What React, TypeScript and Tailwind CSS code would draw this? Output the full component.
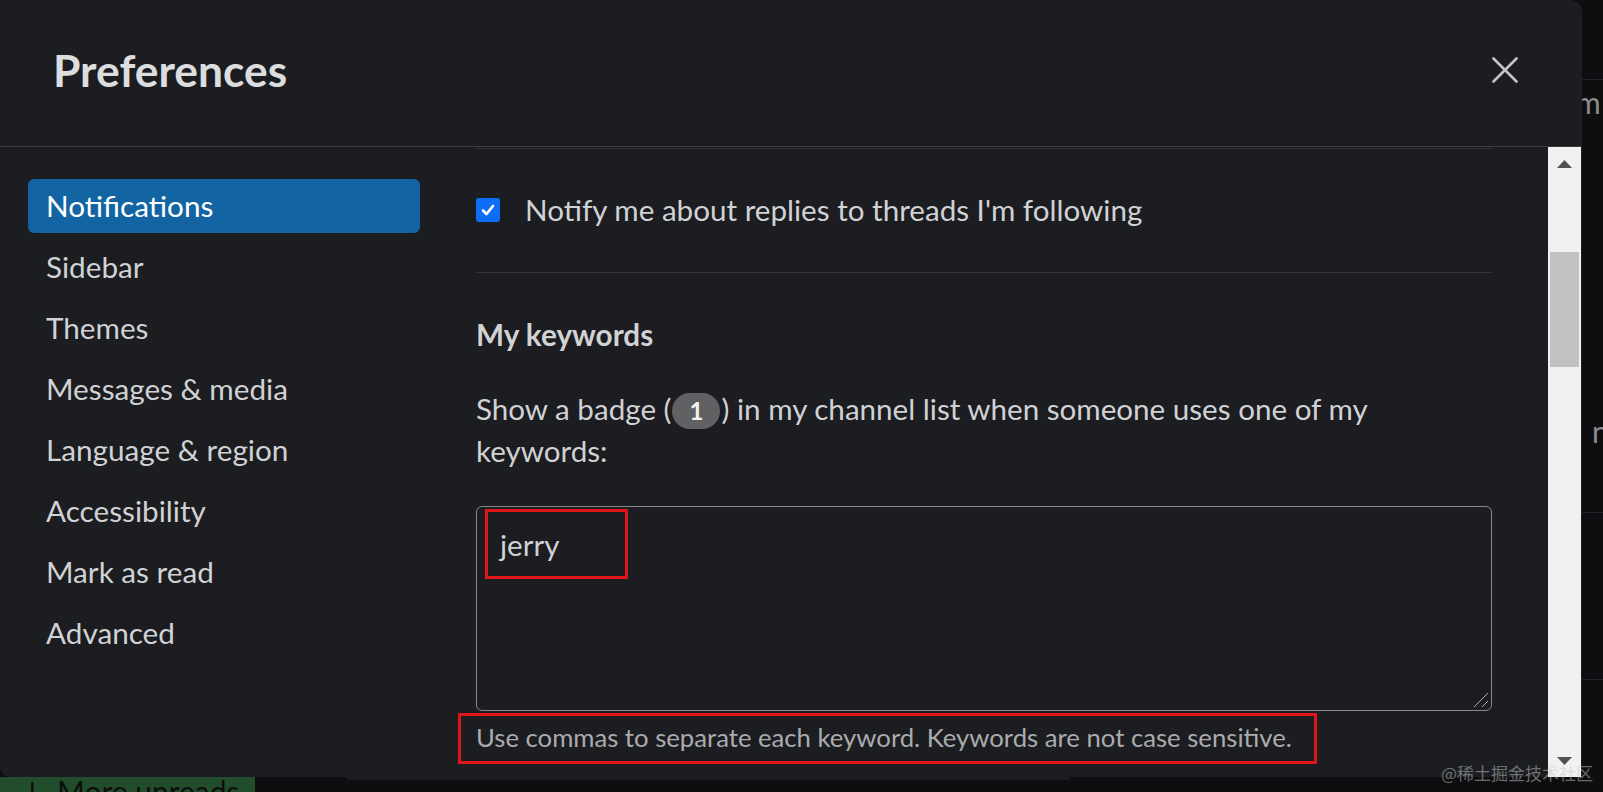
import React from "react";

const navItems = [
  "Notifications",
  "Sidebar",
  "Themes",
  "Messages & media",
  "Language & region",
  "Accessibility",
  "Mark as read",
  "Advanced",
];

function CloseIcon() {
  return (
    <svg width="26" height="26" viewBox="0 0 26 26" fill="none">
      <path d="M1.5 1.5 L24.5 24.5 M24.5 1.5 L1.5 24.5" stroke="#c4c4c5" strokeWidth="2.6" strokeLinecap="round" />
    </svg>
  );
}

function Scrollbar() {
  return (
    <div className="flex w-[33px] flex-col items-center bg-[#f1f1f1] pb-[12px] pt-[13px]">
      <svg width="15" height="8" viewBox="0 0 15 8">
        <polygon points="7.5,0 15,8 0,8" fill="#505050" />
      </svg>
      <div className="mt-[84px] h-[115px] w-[29px] bg-[#c1c1c1]" />
      <div className="flex-1" />
      <svg width="15" height="8" viewBox="0 0 15 8">
        <polygon points="0,0 15,0 7.5,8" fill="#505050" />
      </svg>
    </div>
  );
}

export default function App() {
  return (
    <div className="relative flex h-[792px] w-[1603px] flex-col overflow-hidden bg-[#0e0e10] font-[Lato,'Noto_Sans',sans-serif]">
      <div className="flex h-[777px]">
        {/* modal */}
        <div className="flex w-[1582px] flex-col overflow-hidden rounded-bl-[10px] rounded-tr-[12px] bg-[#1b1d21]">
          <div className="flex h-[147px] items-center justify-between border-b border-[#393a3e] pb-[7px] pl-[53px] pr-[64px]">
            <h1 className="text-[44.4px] font-bold leading-[44px] text-[#dcdddf]">Preferences</h1>
            <CloseIcon />
          </div>

          <div className="flex h-[630px]">
            <nav className="flex w-[440px] flex-col gap-[7px] pl-[28px] pr-[20px] pt-[32px]">
              {navItems.map((item, i) => (
                <div
                  key={item}
                  className={
                    i === 0
                      ? "flex h-[54px] items-center rounded-[6px] bg-[#1264a3] pl-[18px] text-[29.7px] leading-[54px] text-white"
                      : "flex h-[54px] items-center rounded-[6px] pl-[18px] text-[29.7px] leading-[54px] text-[#d1d2d3]"
                  }
                >
                  {item}
                </div>
              ))}
            </nav>

            <div className="flex-1 overflow-hidden pl-[36px] pr-[56px]">
              <div className="mt-px h-px bg-[#2e2f33]" />

              <label className="mt-[40px] flex h-[42px] items-center gap-[25px]">
                <span className="flex h-[24px] w-[24px] items-center justify-center rounded-[3px] bg-[#0f6ef7]">
                  <svg width="16" height="16" viewBox="0 0 16 16" fill="none">
                    <path d="M3 8.5 L6.5 12 L13 4" stroke="white" strokeWidth="2.6" strokeLinecap="round" strokeLinejoin="round" />
                  </svg>
                </span>
                <span className="text-[29.6px] leading-[42px] text-[#d1d2d3]">
                  Notify me about replies to threads I'm following
                </span>
              </label>

              <div className="mt-[41px] h-px bg-[#35363a]" />

              <h2 className="mt-[41px] text-[29.7px] font-bold leading-[42px] text-[#d1d2d3]">My keywords</h2>

              <p className="mt-[32px] text-[29.6px] leading-[42px] text-[#d1d2d3]">
                Show a badge (
                <span className="mx-[1px] inline-flex h-[36px] w-[48px] items-center justify-center rounded-full bg-[#616164] text-[24px] font-bold leading-[36px] text-[#f2f2f2]">
                  1
                </span>
                ) in my channel list when someone uses one of my
                <br />
                keywords:
              </p>

              <div className="relative mt-[34px] h-[205px] rounded-[6px] border border-[#87888b] pl-[23px] pt-[17px]">
                <div className="text-[29.6px] leading-[42px] text-[#d1d2d3]">jerry</div>
                <div className="absolute left-[8px] top-[2px] h-[70px] w-[143px] border-[3px] border-[#e0151b]" />
                <svg className="absolute bottom-[2px] right-[2px]" width="16" height="16" viewBox="0 0 16 16">
                  <path d="M1 15 L15 1 M9 15 L15 9" stroke="#a9a9ab" strokeWidth="1" />
                </svg>
              </div>

              <div className="-ml-[18px] mt-[2px] h-[51px] w-[859px] border-[3px] border-[#e0151b] pl-[15px] pt-[3px]">
                <p className="whitespace-nowrap text-[25.7px] leading-[36px] text-[#ababad]">
                  Use commas to separate each keyword. Keywords are not case sensitive.
                </p>
              </div>
            </div>

            <Scrollbar />
            <div className="w-px" />
          </div>
        </div>

        {/* backdrop behind the modal */}
        <div className="flex flex-1 flex-col overflow-hidden">
          <div className="h-[79px]" />
          <div className="h-px bg-[#242428]" />
          <div className="-ml-[6px] mt-[4px] text-[30px] leading-[36px] text-[#8c8c90]">m</div>
          <div className="h-[293px]" />
          <div className="ml-[10px] text-[30px] leading-[36px] text-[#8c8c90]">n</div>
          <div className="h-[63px]" />
          <div className="h-px bg-[#222226]" />
          <div className="h-[166px]" />
          <div className="h-px bg-[#222226]" />
        </div>
      </div>

      <div className="flex h-[15px] overflow-hidden">
        <div className="flex w-[255px] items-start gap-[14px] bg-[#214d2c] pl-[22px]">
          <span className="-mt-[1px] text-[28px] leading-[30px] text-[#0d0d0d]">↓</span>
          <span className="-mt-[1px] text-[30px] leading-[30px] text-[#0d0d0d]">More unreads</span>
        </div>
        <div className="w-[92px]" />
        <div className="h-[3px] w-[723px] bg-[#1c1c1f]" />
      </div>

      <div className="absolute bottom-[9px] right-[10px] text-[17px] leading-[20px] text-[#c8c8c8]/50 font-['Noto_Sans_CJK_SC',sans-serif]">
        @稀土掘金技术社区
      </div>
    </div>
  );
}
